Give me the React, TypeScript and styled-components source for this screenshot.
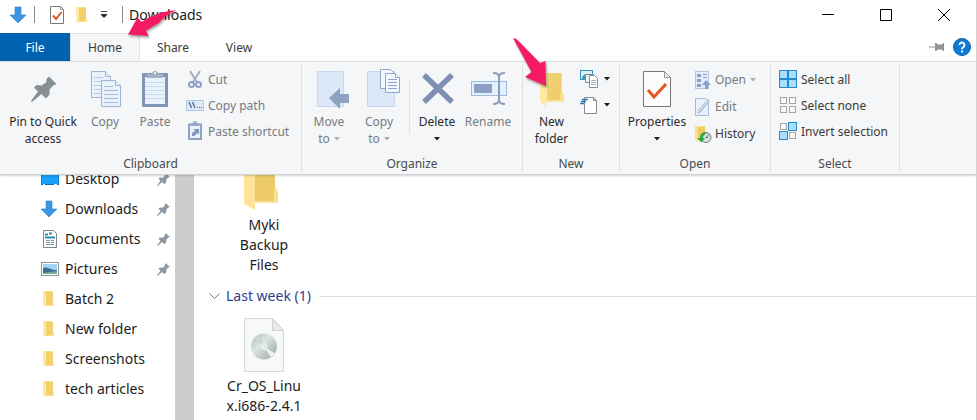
import React from "react";
import styled, { createGlobalStyle } from "styled-components";

const GlobalStyle = createGlobalStyle`
  * { box-sizing: border-box; }
  body { margin: 0; background: #fff; font-family: "Noto Sans", "Open Sans", sans-serif; color: #1c1c1c; }
  button { font: inherit; color: inherit; background: none; border: 0; padding: 0; margin: 0; }
  svg { display: block; flex: none; overflow: visible; }
`;

const Window = styled.div`
  position: relative;
  height: 100vh;
  display: flex;
  flex-direction: column;
  overflow: hidden;
  border-right: 1px solid #d4d4d4;
`;

const TitleBar = styled.header`
  display: flex;
  align-items: center;
  height: 33px;
  padding: 0 3px 4px 8px;
  flex: none;
`;

const QuickButton = styled.button<{ $width: number }>`
  display: flex;
  justify-content: center;
  width: ${(p) => p.$width}px;
`;

const Divider = styled.span<{ $gap: number }>`
  width: 1px;
  height: 17px;
  margin: 0 ${(p) => p.$gap}px;
  background: #8a8a8a;
`;

const Title = styled.h1`
  margin: 0;
  flex: 1;
  font-size: 14px;
  line-height: 20px;
  font-weight: 400;
`;

const WindowButton = styled.button`
  display: flex;
  align-items: center;
  justify-content: center;
  width: 58px;
  height: 28px;
`;

const TabRow = styled.nav`
  display: flex;
  height: 28px;
  flex: none;
  align-items: stretch;
  font-size: 12px;
  color: #3a3a3a;
`;

const Tab = styled.button<{ $kind?: "file" | "active" }>`
  width: ${(p) => (p.$kind ? 70 : 66)}px;
  color: ${(p) => (p.$kind === "file" ? "#fff" : "inherit")};
  background: ${(p) => (p.$kind === "file" ? "#0063b1" : p.$kind === "active" ? "#f4f6f8" : "transparent")};
  border: solid #dfe2e5;
  border-width: ${(p) => (p.$kind === "active" ? "1px 1px 0 1px" : "0")};
`;

const TabTools = styled.div`
  display: flex;
  align-items: center;
  gap: 8px;
  margin-left: auto;
  padding-right: 5px;
`;

const Ribbon = styled.section`
  position: relative;
  z-index: 1;
  display: flex;
  flex: none;
  padding: 2px 0;
  background: #f4f6f8;
  border-top: 1px solid #dadddf;
  border-bottom: 1px solid #d0d2d4;
  box-shadow: 0 1px 2px rgba(0, 0, 0, 0.18);
  font-size: 12px;
  line-height: 17px;
`;

const Group = styled.div<{ $width: number }>`
  width: ${(p) => p.$width}px;
  padding-top: 2px;
  flex: none;
  border-right: 1px solid #dfe2e5;
`;

const GroupBody = styled.div<{ $inset?: number }>`
  display: flex;
  align-items: flex-start;
  height: 89px;
  padding-left: ${(p) => p.$inset ?? 0}px;
`;

const GroupLabel = styled.div`
  text-align: center;
  color: #4a4a4a;
`;

const BigButton = styled.button<{ $width: number }>`
  display: flex;
  flex-direction: column;
  align-items: center;
  flex: none;
  width: ${(p) => p.$width}px;
  padding-top: 3px;
  white-space: nowrap;
  color: #2b2b2b;
  &:disabled { color: #777b80; }
  svg + span { margin-top: 4px; }
`;

const Line = styled.span`
  display: flex;
  align-items: center;
  justify-content: center;
  gap: 4px;
  height: 17px;
`;

const InnerRule = styled.span`
  width: 1px;
  height: 54px;
  margin: 14px 6px 0 7px;
  background: #dcdfe3;
`;

const SmallList = styled.div<{ $row: number }>`
  display: grid;
  grid-auto-rows: ${(p) => p.$row}px;
`;

const SmallButton = styled.button`
  display: flex;
  align-items: center;
  gap: 4px;
  white-space: nowrap;
  color: #3a3a3a;
  &:disabled { color: #777b80; }
`;

const Content = styled.div`
  display: flex;
  flex: 1;
  min-height: 0;
  overflow: hidden;
  font-size: 14px;
  line-height: 20px;
`;

const Sidebar = styled.aside`
  width: 175px;
  flex: none;
`;

const SideList = styled.ul`
  list-style: none;
  margin: -11px 0 0;
  padding: 0 5px 0 40px;
`;

const SideItem = styled.li`
  display: flex;
  align-items: center;
  height: 30px;
`;

const SideLink = styled.a`
  display: flex;
  align-items: center;
  flex: 1;
  gap: 5px;
  color: inherit;
  text-decoration: none;
`;

const ScrollTrack = styled.div`
  width: 19px;
  flex: none;
  background: #cdcdcd;
`;

const Files = styled.main`
  flex: 1;
  padding-left: 15px;
`;

const FileTile = styled.figure`
  width: 80px;
  margin: 0 0 0 15px;
  display: flex;
  flex-direction: column;
  align-items: center;
  text-align: center;
`;

const Caption = styled.figcaption`
  margin-top: 4px;
  white-space: nowrap;
`;

const SectionHead = styled.h2`
  display: flex;
  align-items: center;
  gap: 6px;
  margin: 11px 0 12px;
  font-size: 14px;
  line-height: 20px;
  font-weight: 400;
  color: #2d3f8c;
`;

const SectionRule = styled.span`
  flex: 1;
  height: 1px;
  margin-left: 2px;
  background: #dcdcdc;
`;

const Overlay = styled.svg`
  position: absolute;
  z-index: 2;
  pointer-events: none;
  filter: drop-shadow(1px 2px 1px rgba(0, 0, 0, 0.35));
`;

const HomePointer = styled(Overlay)`
  left: 128px;
  top: 9px;
`;

const FolderPointer = styled(Overlay)`
  left: 512px;
  top: 37px;
`;

const Caret = ({ color = "#1c1c1c" }: { color?: string }) => (
  <svg width="6" height="4" viewBox="0 0 6 4"><path d="M0 0h6L3 3.5z" fill={color} /></svg>
);

const DownArrow = () => (
  <svg width="18" height="18" viewBox="0 0 18 18">
    <path d="M6 1h6v8h5l-8 8-8-8h5z" fill="#3b95e3" stroke="#2b7fcc" strokeWidth=".6" />
  </svg>
);

const CheckDoc = () => (
  <svg width="16" height="18" viewBox="0 0 16 18">
    <path d="M1.500.5h10l3 3v14h-13z" fill="#fff" stroke="#777" />
    <path d="M11.500.5v3h3" fill="none" stroke="#999" />
    <path d="M4 9.500l3 3.500 5.500-7" fill="none" stroke="#e0561f" strokeWidth="2" />
  </svg>
);

const SmallFolder = () => (
  <svg width="18" height="18" viewBox="0 0 18 18">
    <path d="M3 1h10v11l1 1v3H5l-2-1z" fill="#fbe08c" />
    <path d="M6 2h7v10l-1 1v2H6z" fill="#f2d06c" />
    <path d="M3 1l3 1.500V17l-3-2z" fill="#ffe9a6" />
  </svg>
);

const pinPath =
  "M18 .5L25.500 8 22 9.700 18.500 13.500V18.500L15 22.500 10.500 18 1 26 0 25 7 15.500 3 11.500 5.500 9 10.500 9.500 15.500 6V3z";

const PushPin = ({ size, color = "#8c98a4" }: { size: number; color?: string }) => (
  <svg width={size} height={size} viewBox="0 0 26 26"><path d={pinPath} fill={color} /></svg>
);

const PinBig = () => (
  <svg width="40" height="40" viewBox="0 0 40 40">
    <g transform="translate(8 7)"><path d={pinPath} fill="#858f94" /></g>
  </svg>
);

const CopyBig = () => (
  <svg width="40" height="40" viewBox="0 0 40 40">
    <g fill="#e9f1fb" stroke="#9db3d6">
      <path d="M6.500 2.500h14l5 5v21h-19z" />
      <path d="M20.500 2.500v5h5" />
      <path d="M9 8.500h9M9 12.500h13M9 16.500h8M9 20.500h8M9 24.500h8" stroke="#bccbe5" />
      <path d="M16.500 11.500h14l5 5v21h-19z" />
      <path d="M30.500 11.500v5h5" />
      <path d="M19 17.500h9M19 21.500h14M19 25.500h14M19 29.500h14M19 33.500h14" stroke="#a7bad9" />
    </g>
  </svg>
);

const PasteBig = () => (
  <svg width="40" height="40" viewBox="0 0 40 40">
    <rect x="7" y="4" width="26" height="34" rx="1" fill="#8094b8" />
    <rect x="10" y="8" width="20" height="27" fill="#eaf2fd" />
    <path d="M10 13.500h20M10 17.500h20M10 21.500h20M10 25.500h20M10 29.500h20" stroke="#cad9ee" />
    <path d="M12 9V5h5a3 3 0 0 1 6 0h5v4z" fill="#a5b0c4" />
    <circle cx="20" cy="4" r="1" fill="#fff" />
  </svg>
);

const MoveBig = () => (
  <svg width="40" height="40" viewBox="0 0 40 40">
    <path d="M8.500 2.500h26v35h-26z" fill="#dce8f8" stroke="#c6d7ef" />
    <path d="M20 29l11-10v6h9v9h-9v6z" fill="#8ea2c4" />
  </svg>
);

const CopyToBig = () => (
  <svg width="40" height="40" viewBox="0 0 40 40">
    <path d="M8.500 2.500h27v35h-27z" fill="#dce8f8" stroke="#c6d7ef" />
    <g fill="#f3f7fd" stroke="#8da7d0">
      <path d="M21.500.5h10l3 3v16h-13z" />
      <path d="M26.500 4.500h10l4 4v15h-14z" />
      <path d="M36.500 4.500v4h4M29 10.500h9M29 13.500h9M29 16.500h9M29 19.500h9" />
    </g>
  </svg>
);

const DeleteBig = () => (
  <svg width="40" height="40" viewBox="0 0 40 40">
    <path d="M7 6l28 27M35 6L7 33" stroke="#7d90b2" strokeWidth="5.500" />
  </svg>
);

const RenameBig = () => (
  <svg width="40" height="40" viewBox="0 0 40 40">
    <rect x="3.500" y="12.500" width="35" height="14" fill="#e6f0fd" stroke="#9ab9e0" />
    <rect x="6" y="15" width="18" height="9" fill="#8ba0c4" />
    <path d="M25 4c4 0 6 1 6 4v23c0 3-2 4-6 4M37 4c-4 0-6 1-6 4v23c0 3 2 4 6 4" fill="none" stroke="#8c9ebd" strokeWidth="2" />
  </svg>
);

const FolderBig = () => (
  <svg width="40" height="40" viewBox="0 0 40 40">
    <defs>
      <linearGradient id="folderBack" x1="0" x2="1" y1="0" y2="1">
        <stop offset="0" stopColor="#f3d374" /><stop offset="1" stopColor="#eecb69" />
      </linearGradient>
    </defs>
    <path d="M11 4h19v18l2 4v7H14z" fill="#fbdf8a" />
    <path d="M15 4h14v20l-1 2v6H15z" fill="url(#folderBack)" />
    <path d="M15 31h17v2H15z" fill="#fce29a" />
    <path d="M8 8l7-3v24l-1 3v6l-6-6z" fill="#ffe8a2" />
  </svg>
);

const PropertiesBig = () => (
  <svg width="40" height="40" viewBox="0 0 40 40">
    <path d="M6.500 2.500h21l6 6v29h-27z" fill="#fcfcfc" stroke="#777" />
    <path d="M27.500 2.500v6h6z" fill="#e8e8e8" stroke="#999" />
    <path d="M11 21l6 7 12-13" fill="none" stroke="#e1561e" strokeWidth="3" />
  </svg>
);

const CutIcon = () => (
  <svg width="18" height="18" viewBox="0 0 18 18">
    <path d="M4 1l7.500 12M14 1L6.500 13" stroke="#a5b0bf" strokeWidth="2" />
    <g fill="none" stroke="#8ba0c4" strokeWidth="2"><circle cx="5.500" cy="14.500" r="2.500" /><circle cx="12.500" cy="14.500" r="2.500" /></g>
  </svg>
);

const PathIcon = () => (
  <svg width="18" height="18" viewBox="0 0 18 18">
    <path d="M0 4.500h17.500v10H.5v-10" fill="#dce9f9" stroke="#b1c4e0" />
    <path d="M3 6l2.500 6M6.500 6L9 12" stroke="#5f7698" strokeWidth="1.500" />
    <path d="M11 11.500h1M13 11.500h1M15 11.500h1" stroke="#5f7698" />
  </svg>
);

const ShortcutIcon = () => (
  <svg width="18" height="18" viewBox="0 0 18 18">
    <rect x="3" y="2.500" width="12" height="14.500" fill="#eaf2fd" stroke="#8ea2c4" strokeWidth="2" />
    <path d="M5 4V1h2a2 2 0 0 1 4 0h2v3z" fill="#9cabc5" />
    <path d="M6 14v-3l3-2-1.500-2H13v5.500L11 11l-2.500 3z" fill="#7f97c0" />
  </svg>
);

const NewItemIcon = () => (
  <svg width="20" height="18" viewBox="0 0 20 18">
    <rect x=".5" y=".5" width="12" height="9" fill="#d9effa" stroke="#3d8eb9" />
    <path d="M2 7l3-3 3 3v2H2z" fill="#4c94b4" />
    <path d="M5.500 4.500h8v8h-8z" fill="#edf3f7" stroke="#768a98" />
    <path d="M9.500 5.500h5l3 3v9h-8z" fill="#fff" stroke="#838b94" />
    <path d="M11 10.500h5M11 12.500h5M11 14.500h5" stroke="#a3abb4" />
  </svg>
);

const EasyAccessIcon = () => (
  <svg width="20" height="18" viewBox="0 0 20 18">
    <path d="M4.500 1.500h9l3 3v13h-12z" fill="#fff" stroke="#858b91" />
    <path d="M13.500 1.500v3h3" fill="none" stroke="#858b91" />
    <path d="M2 3.500h6M1 5.500h5M0 7.500h4" stroke="#287bb8" strokeWidth="1.500" />
  </svg>
);

const OpenIcon = () => (
  <svg width="17" height="18" viewBox="0 0 17 18">
    <rect x="1.500" y=".5" width="13" height="17" fill="#e1ebf9" stroke="#b2c5e1" />
    <path d="M3 3h4v3H3zM3 8h4v3H3zM3 13h4v3H3zM9 3h4v1H9zM9 6h4v1H9z" fill="#8aa0c6" />
    <path d="M8 14l4-5 5 5h-3v4h-3v-4z" fill="#8aa0c6" />
  </svg>
);

const EditIcon = () => (
  <svg width="17" height="18" viewBox="0 0 17 18">
    <path d="M1.500.5h10l3 3v14h-13z" fill="#e8f0fc" stroke="#a5b9d8" />
    <path d="M3 16l1-4L14 1l2 2-9 11z" fill="#aebfd8" />
    <path d="M4 14l10-11" stroke="#edf3fa" />
  </svg>
);

const HistoryIcon = () => (
  <svg width="17" height="18" viewBox="0 0 17 18">
    <path d="M1 1h10v15H3l-2-1z" fill="#fbe08c" /><path d="M4 2h7v12H4z" fill="#f0cb62" />
    <circle cx="12" cy="12.500" r="5" fill="#dce1e3" stroke="#717a80" />
    <path d="M12 12.500l3-3M12 12.500h2" fill="none" stroke="#666" />
    <path d="M11 7a6 6 0 0 0-5 6H3l4.500 4.500L11 13H9c0-2 1-3 3-4z" fill="#31a547" />
  </svg>
);

const SelectIcon = ({ filled }: { filled: boolean[] }) => (
  <svg width="18" height="18" viewBox="0 0 18 18">
    {filled.map((on, i) => {
      const x = (i % 2) * 9;
      const y = Math.floor(i / 2) * 9;
      return on ? (
        <rect key={i} x={x + 0.5} y={y + 0.5} width="8" height="8" fill="#a9defc" stroke="#268ac9" />
      ) : (
        <rect key={i} x={x + 1.5} y={y + 1.5} width="6" height="6" fill="#fafafa" stroke="#a2a5a8" />
      );
    })}
  </svg>
);

const DesktopIcon = () => (
  <svg width="20" height="18" viewBox="0 0 20 18">
    <rect x="1.500" y="2.500" width="17" height="12" fill="#18a0fb" stroke="#147fd0" />
    <path d="M1 14.500h18" stroke="#0869b8" /><path d="M3 14.500h2M14 14.500h3" stroke="#d9efff" />
  </svg>
);

const DocumentsIcon = () => (
  <svg width="20" height="18" viewBox="0 0 20 18">
    <path d="M3.500.5h10l3 3v14h-13z" fill="#fff" stroke="#7d868c" />
    <path d="M5 4.500h3M9 3.500h3M5 7.500h10" stroke="#298bb8" strokeWidth="2" />
    <path d="M6 10.500h4M6 12.500h4M6 14.500h8M11 10.500h3M11 12.500h3" stroke="#8096a3" />
  </svg>
);

const PicturesIcon = () => (
  <svg width="20" height="18" viewBox="0 0 20 18">
    <rect x="1.500" y="2.500" width="17" height="13" fill="#fff" stroke="#8d959b" />
    <path d="M3 4h14v10H3z" fill="#a5d2f2" /><path d="M3 8c4-2 7 2 14 2v4H3z" fill="#38708f" />
    <path d="M3 13l14-2v3H3z" fill="#7bab92" />
  </svg>
);

const TabPin = () => (
  <svg width="16" height="10" viewBox="0 0 16 10">
    <path d="M0 4.500h6v-3.500h1l2 1.500h4l1-1.500h1v8h-1l-1-1.500H9L7 9H6V5.500H0z" fill="#8d9399" />
  </svg>
);

const HelpIcon = () => (
  <svg width="18" height="18" viewBox="0 0 18 18">
    <circle cx="9" cy="9" r="8.500" fill="#0e7bd3" stroke="#0b62aa" />
    <path d="M6.500 7a2.500 2.500 0 1 1 4 2c-1 .7-1.500 1-1.500 2.200M9 12.500v2" fill="none" stroke="#fff" strokeWidth="1.800" />
  </svg>
);

const DiscFile = () => (
  <svg width="40" height="54" viewBox="0 0 40 54">
    <defs>
      <linearGradient id="disc" x1="0" y1="0" x2="1" y2="1">
        <stop offset="0" stopColor="#b2bbbb" /><stop offset=".4" stopColor="#d9e5e1" />
        <stop offset=".7" stopColor="#b8c1c1" /><stop offset="1" stopColor="#a8afb0" />
      </linearGradient>
    </defs>
    <path d="M.5.5h28l11 12v41H.5z" fill="#f7f8f9" stroke="#d6d8d9" />
    <path d="M28.500.5v12h11z" fill="#e7e9ea" stroke="#cfd1d2" />
    <circle cx="20" cy="28.500" r="13" fill="url(#disc)" />
    <path d="M20 28.500L27 39.500l4-4z" fill="#edf1f1" /><path d="M20 28.500L10 20l5-4z" fill="#cbd3d3" />
    <circle cx="20" cy="28.500" r="3" fill="#e3e9e9" stroke="#eff3f3" />
  </svg>
);

const places = [
  { name: "Desktop", icon: <DesktopIcon />, pinned: true },
  { name: "Downloads", icon: <svg width="20" height="18"><DownArrow /></svg>, pinned: true },
  { name: "Documents", icon: <DocumentsIcon />, pinned: true },
  { name: "Pictures", icon: <PicturesIcon />, pinned: true },
  ...["Batch 2", "New folder", "Screenshots", "tech articles"].map((name) => ({
    name,
    icon: <svg width="20" height="18"><SmallFolder /></svg>,
    pinned: false,
  })),
];

type BigProps = { icon: React.ReactNode; lines: string[]; width: number; disabled?: boolean; menu?: boolean };

const Big = ({ icon, lines, width, disabled, menu }: BigProps) => (
  <BigButton $width={width} disabled={disabled}>
    {icon}
    {lines.map((line, i) => (
      <Line key={line || "menu"}>
        {line}
        {menu && i === lines.length - 1 && <Caret color={disabled ? "#aaaeb3" : undefined} />}
      </Line>
    ))}
  </BigButton>
);

export default function App() {
  return (
    <>
      <GlobalStyle />
      <Window>
        <TitleBar>
          <QuickButton $width={19} aria-label="Downloads folder"><DownArrow /></QuickButton>
          <Divider $gap={7} />
          <QuickButton $width={30} aria-label="Properties"><CheckDoc /></QuickButton>
          <QuickButton $width={20} aria-label="New folder"><SmallFolder /></QuickButton>
          <QuickButton $width={24} aria-label="Customize toolbar">
            <svg width="8" height="8" viewBox="0 0 8 8"><path d="M1 .5h6M1 3.500h6L4 6.500z" stroke="#222" fill="#222" strokeWidth=".8" /></svg>
          </QuickButton>
          <Divider $gap={6} />
          <Title>Downloads</Title>
          <WindowButton aria-label="Minimize"><svg width="12" height="12"><path d="M0 5.500h12" stroke="#000" /></svg></WindowButton>
          <WindowButton aria-label="Maximize"><svg width="12" height="12"><path d="M.5.5h11v11H.5z" fill="none" stroke="#000" /></svg></WindowButton>
          <WindowButton aria-label="Close"><svg width="12" height="12"><path d="M0 0l12 12M12 0L0 12" stroke="#000" /></svg></WindowButton>
        </TitleBar>
        <TabRow>
          <Tab $kind="file">File</Tab>
          <Tab $kind="active">Home</Tab>
          <Tab>Share</Tab>
          <Tab>View</Tab>
          <TabTools>
            <QuickButton $width={16} aria-label="Pin ribbon"><TabPin /></QuickButton>
            <QuickButton $width={18} aria-label="Help"><HelpIcon /></QuickButton>
          </TabTools>
        </TabRow>
        <Ribbon>
          <Group $width={302}>
            <GroupBody>
              <Big width={86} icon={<PinBig />} lines={["Pin to Quick", "access"]} />
              <Big width={38} icon={<CopyBig />} lines={["Copy"]} disabled />
              <Big width={62} icon={<PasteBig />} lines={["Paste"]} disabled />
              <SmallList $row={26}>
                <SmallButton disabled><CutIcon />Cut</SmallButton>
                <SmallButton disabled><PathIcon />Copy path</SmallButton>
                <SmallButton disabled><ShortcutIcon />Paste shortcut</SmallButton>
              </SmallList>
            </GroupBody>
            <GroupLabel>Clipboard</GroupLabel>
          </Group>
          <Group $width={221}>
            <GroupBody>
              <Big width={54} icon={<MoveBig />} lines={["Move", "to"]} disabled menu />
              <Big width={46} icon={<CopyToBig />} lines={["Copy", "to"]} disabled menu />
              <InnerRule />
              <Big width={42} icon={<DeleteBig />} lines={["Delete", ""]} menu />
              <Big width={60} icon={<RenameBig />} lines={["Rename"]} disabled />
            </GroupBody>
            <GroupLabel>Organize</GroupLabel>
          </Group>
          <Group $width={97}>
            <GroupBody>
              <Big width={57} icon={<FolderBig />} lines={["New", "folder"]} />
              <SmallList $row={26}>
                <SmallButton aria-label="New item"><NewItemIcon /><Caret /></SmallButton>
                <SmallButton aria-label="Easy access"><EasyAccessIcon /><Caret /></SmallButton>
              </SmallList>
            </GroupBody>
            <GroupLabel>New</GroupLabel>
          </Group>
          <Group $width={151}>
            <GroupBody>
              <Big width={74} icon={<PropertiesBig />} lines={["Properties", ""]} menu />
              <SmallList $row={27}>
                <SmallButton disabled><OpenIcon />Open <Caret color="#aaaeb3" /></SmallButton>
                <SmallButton disabled><EditIcon />Edit</SmallButton>
                <SmallButton><HistoryIcon />History</SmallButton>
              </SmallList>
            </GroupBody>
            <GroupLabel>Open</GroupLabel>
          </Group>
          <Group $width={129}>
            <GroupBody $inset={8}>
              <SmallList $row={26}>
                <SmallButton><SelectIcon filled={[true, true, true, true]} />Select all</SmallButton>
                <SmallButton><SelectIcon filled={[false, false, false, false]} />Select none</SmallButton>
                <SmallButton><SelectIcon filled={[false, true, true, false]} />Invert selection</SmallButton>
              </SmallList>
            </GroupBody>
            <GroupLabel>Select</GroupLabel>
          </Group>
        </Ribbon>
        <Content>
          <Sidebar>
            <SideList>
              {places.map((place) => (
                <SideItem key={place.name}>
                  <SideLink href="#">{place.icon}{place.name}</SideLink>
                  {place.pinned && <PushPin size={13} />}
                </SideItem>
              ))}
            </SideList>
          </Sidebar>
          <ScrollTrack />
          <Files>
            <FileTile>
              <svg width="40" height="36" viewBox="0 0 40 36">
                <path d="M1-8h30v20l3 5v10H10z" fill="#fbdf8a" />
                <path d="M11-8h20v20l-1 4v11H11z" fill="#eecb69" />
                <path d="M11 26h23v2H11z" fill="#fce29a" />
                <path d="M0-8h4l7 5v38L0 29z" fill="#ffe39a" />
              </svg>
              <Caption>Myki<br />Backup<br />Files</Caption>
            </FileTile>
            <SectionHead>
              <svg width="11" height="7" viewBox="0 0 11 7"><path d="M.5.5l5 5 5-5" fill="none" stroke="#777" /></svg>
              Last week (1)
              <SectionRule />
            </SectionHead>
            <FileTile>
              <DiscFile />
              <Caption>Cr_OS_Linu<br />x.i686-2.4.1</Caption>
            </FileTile>
          </Files>
        </Content>
        <HomePointer width="49" height="30" viewBox="0 0 49 30">
          <path d="M0 25.500L9.500 8.500l4 4.500Q28 3 48 1 35 8 31 14L18 21.500l2.500 5.500z" fill="#f51b63" />
        </HomePointer>
        <FolderPointer width="36" height="50" viewBox="0 0 36 50">
          <path d="M1 1l3.500 1L28 26l5.500-2L34 49 13 40l6.500-5z" fill="#f51b63" />
        </FolderPointer>
      </Window>
    </>
  );
}
